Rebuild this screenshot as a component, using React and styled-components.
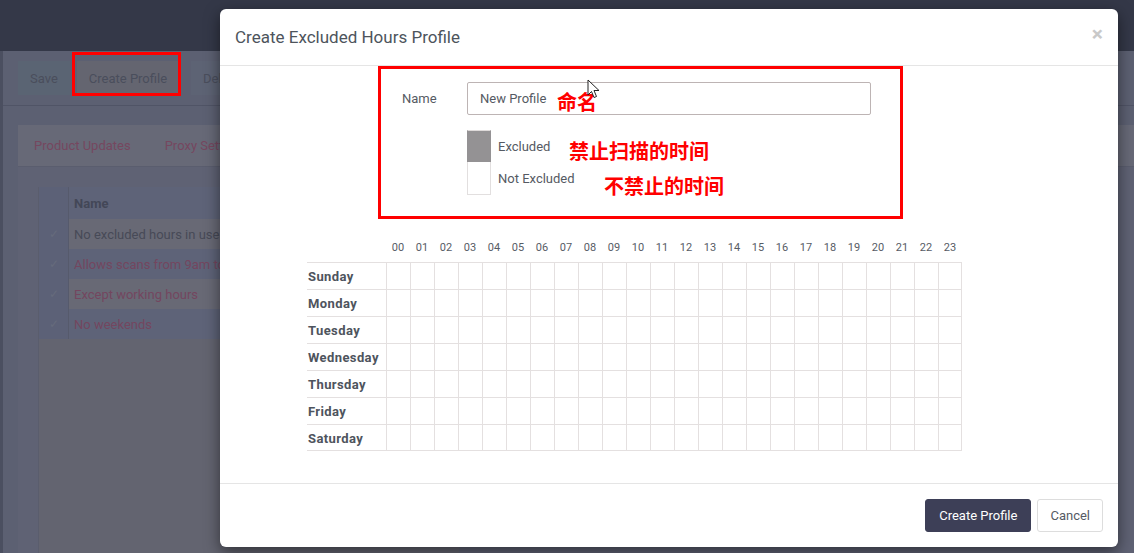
import React from "react";
import styled, { createGlobalStyle } from "styled-components";

const GlobalStyle = createGlobalStyle`
  html, body {
    margin: 0;
    padding: 0;
  }
  body {
    width: 1134px;
    height: 553px;
    overflow: hidden;
    background: #5c6072;
    font-family: Roboto, "Noto Sans", sans-serif;
  }
`;

const HOURS = Array.from({ length: 24 }, (_, i) => String(i).padStart(2, "0"));
const DAYS = ["Sunday", "Monday", "Tuesday", "Wednesday", "Thursday", "Friday", "Saturday"];

const profiles = [
  { name: "No excluded hours in use", link: false, tone: "light" },
  { name: "Allows scans from 9am to 5pm", link: true, tone: "blue" },
  { name: "Except working hours", link: true, tone: "light" },
  { name: "No weekends", link: true, tone: "blue" },
];

/* ---------- page behind the modal (already dimmed colours) ---------- */

const Shell = styled.div`
  position: relative;
  width: 1134px;
  height: 553px;
  display: flex;
  flex-direction: column;
  overflow: hidden;
`;

const TopBar = styled.div`
  height: 51px;
  background: #343848;
`;

const Main = styled.div`
  flex: 1;
  display: flex;
`;

const SideStrip = styled.div`
  width: 3px;
  background: #4b4f60;
`;

const Content = styled.div`
  flex: 1;
  display: flex;
  flex-direction: column;
`;

const Toolbar = styled.div`
  height: 55px;
  display: flex;
  align-items: center;
  gap: 7px;
  padding: 0 15px;
  border-bottom: 1px solid #505466;
  box-sizing: border-box;
`;

const ToolButton = styled.div`
  position: relative;
  height: 34px;
  display: flex;
  align-items: center;
  padding: 0 ${(p) => p.$pad || 12}px;
  margin-left: ${(p) => p.$gap || 0}px;
  background: ${(p) => p.$bg};
  color: #4a4e5c;
  font-size: 13px;

  ${(p) =>
    p.$marked &&
    `
    &::after {
      content: "";
      position: absolute;
      left: -5px;
      right: -2px;
      top: -9px;
      bottom: -1px;
      border: 3px solid #ff0000;
    }
  `}
`;

const Panel = styled.div`
  flex: 1;
  margin: 19px 0 0 15px;
  display: flex;
  flex-direction: column;
  background: #5f6274;
`;

const Tabs = styled.div`
  height: 41px;
  display: flex;
  align-items: center;
  gap: 34px;
  padding-left: 16px;
  background: #676977;
  border-bottom: 1px solid #5a5d6e;
`;

const Tab = styled.span`
  color: #76475f;
  font-size: 13px;
`;

const PanelBody = styled.div`
  flex: 1;
  display: flex;
  padding: 20px 0 0 20px;
`;

const ListTable = styled.div`
  width: 420px;
  display: flex;
  flex-direction: column;
  background: #636470;
  border-left: 1px solid #5a5d6d;
`;

const ListRow = styled.div`
  height: ${(p) => (p.$head ? 32 : 30)}px;
  display: flex;
  background: ${(p) => (p.$tone === "light" ? "#686975" : "#5e6378")};
`;

const CheckCell = styled.div`
  width: 29px;
  display: flex;
  align-items: center;
  justify-content: center;
  background: #5c6177;
  border-right: 1px solid #565a6c;
  color: #666b7c;
  font-size: 12px;
`;

const NameCell = styled.div`
  flex: 1;
  display: flex;
  align-items: center;
  padding: 1px 0 0 5px;
  white-space: nowrap;
  font-size: 13px;
  font-weight: ${(p) => (p.$head ? 700 : 400)};
  color: ${(p) => (p.$head ? "#434757" : p.$link ? "#74465f" : "#474a57")};
`;

/* ---------- modal ---------- */

const Modal = styled.div`
  position: absolute;
  left: 220px;
  top: 9px;
  width: 898px;
  height: 538px;
  display: flex;
  flex-direction: column;
  background: #ffffff;
  border-radius: 6px;
  box-shadow: 0 5px 15px rgba(0, 0, 0, 0.5);
  color: #555a63;
`;

const ModalHeader = styled.div`
  height: 56px;
  display: flex;
  align-items: center;
  justify-content: space-between;
  padding: 0 15px 0 15px;
  border-bottom: 1px solid #e5e5e5;
`;

const Title = styled.h4`
  margin: 0;
  font-size: 17px;
  font-weight: 400;
  color: #4d545c;
`;

const Close = styled.span`
  margin-top: -5px;
  font-size: 21px;
  font-weight: 700;
  color: #c9c9c9;
  line-height: 1;
`;

const ModalBody = styled.div`
  flex: 1;
  display: flex;
  flex-direction: column;
`;

const Annotated = styled.div`
  position: relative;
  width: 525px;
  height: 153px;
  margin-left: 158px;
  padding: 13px 0 0 21px;
  box-sizing: border-box;
  border: 3px solid #ff0000;
`;

const NameRow = styled.div`
  display: flex;
  align-items: center;
`;

const Label = styled.label`
  width: 65px;
  font-size: 13px;
  color: #555a63;
`;

const Input = styled.div`
  width: 404px;
  height: 33px;
  display: flex;
  align-items: center;
  padding-left: 12px;
  box-sizing: border-box;
  border: 1px solid #bdb4b4;
  border-radius: 2px;
  font-size: 13px;
  color: #555a63;
`;

const Legend = styled.div`
  margin: 15px 0 0 65px;
  display: flex;
  flex-direction: column;
`;

const LegendRow = styled.div`
  display: flex;
  align-items: center;
`;

const Swatch = styled.span`
  width: 24px;
  height: ${(p) => p.$h}px;
  box-sizing: border-box;
  background: ${(p) => (p.$on ? "#949294" : "#ffffff")};
  border: 1px solid ${(p) => (p.$on ? "#949294" : "#e2dfdf")};
  border-top: ${(p) => (p.$on ? "1px solid #dedada" : "none")};
`;

const LegendText = styled.span`
  margin-left: 7px;
  font-size: 13px;
  color: #555a63;
`;

const Note = styled.span`
  position: absolute;
  left: ${(p) => p.$x}px;
  top: ${(p) => p.$y}px;
  font-family: "Noto Sans CJK SC", sans-serif;
  font-size: 20px;
  font-weight: 700;
  line-height: 20px;
  color: #ff0000;
  white-space: nowrap;
`;

const Pointer = styled.svg`
  position: absolute;
  left: 206px;
  top: 10px;
`;

const Schedule = styled.div`
  margin: 15px 0 0 87px;
  display: grid;
  grid-template-columns: 79px repeat(24, 24px);
  grid-template-rows: 28px;
  grid-auto-rows: 27px;
  width: 655px;
`;

const HourHead = styled.div`
  display: flex;
  align-items: center;
  justify-content: center;
  padding-bottom: 2px;
  font-size: 11px;
  color: #575c65;
`;

const DayCell = styled.div`
  display: flex;
  align-items: center;
  padding: 1px 0 0 1px;
  border-top: 1px solid #e4e0e0;
  border-bottom: ${(p) => (p.$last ? "1px solid #e4e0e0" : "none")};
  font-size: 13px;
  font-weight: 700;
  letter-spacing: 0.4px;
  color: #4e545d;
`;

const HourCell = styled.div`
  border-top: 1px solid #e4e0e0;
  border-left: 1px solid #e4e0e0;
  border-right: ${(p) => (p.$end ? "1px solid #e4e0e0" : "none")};
  border-bottom: ${(p) => (p.$last ? "1px solid #e4e0e0" : "none")};
  background: ${(p) => (p.$excluded ? "#949294" : "#ffffff")};
`;

const ModalFooter = styled.div`
  height: 64px;
  display: flex;
  align-items: center;
  justify-content: flex-end;
  gap: 6px;
  padding: 0 15px 0 0;
  box-sizing: border-box;
  border-top: 1px solid #e5e5e5;
`;

const Button = styled.button`
  height: 33px;
  padding: 0 ${(p) => (p.$primary ? 13 : 12)}px;
  border-radius: 3px;
  border: 1px solid ${(p) => (p.$primary ? "#3d3f57" : "#dddddd")};
  background: ${(p) => (p.$primary ? "#3d3f57" : "#ffffff")};
  color: ${(p) => (p.$primary ? "#ffffff" : "#555a63")};
  font-family: inherit;
  font-size: 13px;
`;

export default function App() {
  return (
    <Shell>
      <GlobalStyle />
      <TopBar />
      <Main>
        <SideStrip />
        <Content>
          <Toolbar>
            <ToolButton $bg="#5a6473" $pad={12}>Save</ToolButton>
            <ToolButton $bg="#646570" $marked>Create Profile</ToolButton>
            <ToolButton $bg="#5d6374" $gap={5}>Delete</ToolButton>
          </Toolbar>
          <Panel>
            <Tabs>
              <Tab>Product Updates</Tab>
              <Tab>Proxy Settings</Tab>
            </Tabs>
            <PanelBody>
              <ListTable>
                <ListRow $head>
                  <CheckCell />
                  <NameCell $head>Name</NameCell>
                </ListRow>
                {profiles.map((p) => (
                  <ListRow key={p.name} $tone={p.tone}>
                    <CheckCell>✓</CheckCell>
                    <NameCell $link={p.link}>{p.name}</NameCell>
                  </ListRow>
                ))}
              </ListTable>
            </PanelBody>
          </Panel>
        </Content>
      </Main>

      <Modal>
        <ModalHeader>
          <Title>Create Excluded Hours Profile</Title>
          <Close>×</Close>
        </ModalHeader>
        <ModalBody>
          <Annotated>
            <NameRow>
              <Label>Name</Label>
              <Input>New Profile</Input>
            </NameRow>
            <Legend>
              <LegendRow>
                <Swatch $on $h={32} />
                <LegendText>Excluded</LegendText>
              </LegendRow>
              <LegendRow>
                <Swatch $h={33} />
                <LegendText>Not Excluded</LegendText>
              </LegendRow>
            </Legend>
            <Note $x={176} $y={23}>命名</Note>
            <Note $x={188} $y={72}>禁止扫描的时间</Note>
            <Note $x={223} $y={107}>不禁止的时间</Note>
            <Pointer width="14" height="20" viewBox="0 0 14 20">
              <path
                d="M1 1 L1 16 L4.5 12.5 L7 18.5 L9.5 17.5 L7 11.5 L12 11.5 Z"
                fill="#ffffff"
                stroke="#222"
                strokeWidth="1"
                strokeLinejoin="round"
              />
            </Pointer>
          </Annotated>

          <Schedule>
            <HourHead />
            {HOURS.map((h) => (
              <HourHead key={h}>{h}</HourHead>
            ))}
            {DAYS.map((d, row) => (
              <React.Fragment key={d}>
                <DayCell $last={row === DAYS.length - 1}>{d}</DayCell>
                {HOURS.map((h, col) => (
                  <HourCell
                    key={h}
                    $end={col === HOURS.length - 1}
                    $last={row === DAYS.length - 1}
                  />
                ))}
              </React.Fragment>
            ))}
          </Schedule>
        </ModalBody>
        <ModalFooter>
          <Button $primary>Create Profile</Button>
          <Button>Cancel</Button>
        </ModalFooter>
      </Modal>
    </Shell>
  );
}
